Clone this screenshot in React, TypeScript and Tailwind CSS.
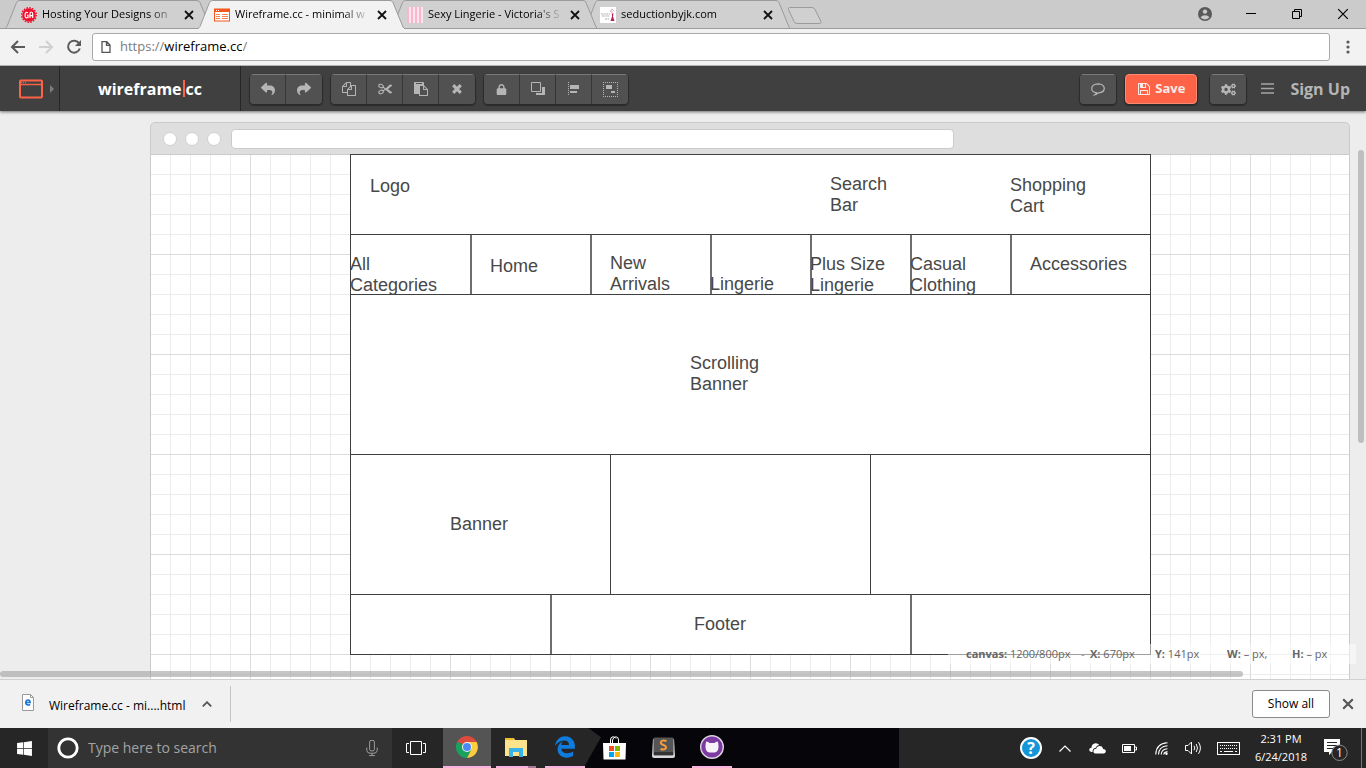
import React from "react";
import { FaReply, FaShare, FaLock, FaWindows, FaEdgeLegacy } from "react-icons/fa6";
import { FaCogs } from "react-icons/fa";

const UI = "font-['Open_Sans','Noto_Sans',sans-serif]";

type TabProps = {
  title: string;
  icon: React.ReactNode;
  active?: boolean;
  layer: string;
};

function CloseGlyph({ className }: { className: string }) {
  return (
    <svg viewBox="0 0 10 10" className={className} fill="none" stroke="currentColor">
      <path d="M1 1l8 8M9 1l-8 8" />
    </svg>
  );
}

function Tab({ title, icon, active, layer }: TabProps) {
  return (
    <div role="tab" aria-selected={!!active} className={`relative flex h-[29px] w-[193px] shrink-0 items-center pl-4 ${layer}`}>
      <svg className="absolute left-0 top-0 h-[29px] w-[207px]" viewBox="0 0 207 29" fill="none">
        <path
          d="M0 28.5L2 26.5L11.5 2.5Q12.500 .5 14.500 .5H192Q194 .5 195 2.500L205 27L206.500 28.5"
          fill={active ? "#f2f2f2" : "#d0d0d0"}
          stroke="#9b9b9b"
        />
        {active ? <path d="M1 28.5H206" stroke="#f2f2f2" /> : <path d="M0 28.5H207" stroke="#9b9b9b" />}
      </svg>
      <span className="relative size-4 shrink-0">{icon}</span>
      <span className="relative ml-[5px] w-[135px] whitespace-nowrap text-[11px] text-black mask-r-from-80%">{title}</span>
      <button aria-label="Close tab" className="relative ml-[7px] text-[#111]">
        <CloseGlyph className="size-[10px] stroke-[1.8]" />
      </button>
    </div>
  );
}

const GaIcon = (
  <svg viewBox="0 0 16 16" className="size-4">
    <circle cx="8" cy="8" r="6.8" fill="#f0112e" />
    <circle cx="8" cy="8" r="7.300" fill="none" stroke="#f0112e" strokeWidth="1.400" strokeDasharray="1.5 1.370" />
    <path d="M7 5.700Q4.300 4.300 4.100 8T7 10.500V8.400H6M9 11V7Q9 5 10.300 5T11.700 7V11M9 8.700H11.700" fill="none" stroke="#fff" strokeWidth="1.200" />
  </svg>
);

const WireIcon = (
  <svg viewBox="0 0 16 16" className="size-4">
    <rect x=".5" y="2" width="15" height="12" fill="#fff" stroke="#f4561d" />
    <path d="M0 3.500H16" stroke="#f4561d" strokeWidth="3" />
    <path d="M2 3.500H3M4 3.500H5" stroke="#fff" />
    <path d="M2 7.500H6M2 9.500H6M2 11.500H6M8 7.500H14M8 9.500H14M8 11.500H14" stroke="#f7824f" />
  </svg>
);

const StripeIcon = (
  <svg viewBox="0 0 16 16" className="size-4">
    <path fill="#fde7ee" d="M0 0h16v16H0z" />
    <path d="M1 0V16M5 0V16M9 0V16M13 0V16" stroke="#fbb6cc" strokeWidth="2" />
  </svg>
);

const SeductionIcon = (
  <svg viewBox="0 0 16 16" className="size-4">
    <path fill="#fff" d="M0 0h16v16H0z" />
    <path d="M1 7H10M2 9H9M5 12H9" stroke="#b5adb0" strokeDasharray="2 .6" />
    <path d="M12 2l-2 3M12 2l2 2M12 4v3" stroke="#d7a8b5" />
    <path d="M12 6.500h1.500l-.5 3 1.500 4.500h-4l1.500-4.500z" fill="#bd2454" />
  </svg>
);

function ToolButton({ label, children, className = "" }: { label: string; children: React.ReactNode; className?: string }) {
  return (
    <button
      aria-label={label}
      className={`flex h-[30px] w-9 items-center justify-center border-t border-t-[#7a7a7a] bg-[#515151] text-[#b5b5b5] ${className}`}
    >
      {children}
    </button>
  );
}

function ToolGroup({ children }: { children: React.ReactNode }) {
  return (
    <div className="flex divide-x divide-[#363636] overflow-hidden rounded-[4px] shadow-[0_1px_1px_1px_#2b2b2b]">{children}</div>
  );
}

function Legacy({ d, className = "size-[14px]" }: { d: string; className?: string }) {
  return (
    <svg viewBox="0 0 1792 1792" fill="currentColor" className={className}>
      <path d={d} />
    </svg>
  );
}

const COPY =
  "M1696 384q40 0 68 28t28 68v1216q0 40-28 68t-68 28h-960q-40 0-68-28t-28-68v-288h-544q-40 0-68-28t-28-68v-672q0-40 20-88t48-76l408-408q28-28 76-48t88-20h416q40 0 68 28t28 68v328q68-40 128-40h416zm-544 213l-299 299h299v-299zm-640-384l-299 299h299v-299zm196 647l316-316v-416h-384v416q0 40-28 68t-68 28h-416v640h512v-256q0-40 20-88t48-76zm956 804v-1152h-384v416q0 40-28 68t-68 28h-416v640h896z";
const PASTE =
  "M768 1664h896v-640h-416q-40 0-68-28t-28-68v-416h-384v1152zm256-1440v-64q0-13-9.5-22.5t-22.5-9.5h-704q-13 0-22.5 9.5t-9.5 22.5v64q0 13 9.5 22.5t22.5 9.5h704q13 0 22.5-9.5t9.5-22.5zm256 672h299l-299-299v299zm512 128v672q0 40-28 68t-68 28h-960q-40 0-68-28t-28-68v-160h-544q-40 0-68-28t-28-68v-1344q0-40 28-68t68-28h1088q40 0 68 28t28 68v328q21 13 36 28l408 408q28 28 48 76t20 88z";
const FLOPPY =
  "M512 1536h768v-384h-768v384zm896 0h128v-896q0-14-10-38.5t-20-34.5l-281-281q-10-10-34-20t-39-10v416q0 40-28 68t-68 28h-576q-40 0-68-28t-28-68v-416h-128v1280h128v-416q0-40 28-68t68-28h832q40 0 68 28t28 68v416zm-384-928v-320q0-13-9.5-22.5t-22.5-9.5h-192q-13 0-22.5 9.5t-9.5 22.5v320q0 13 9.5 22.5t22.5 9.5h192q13 0 22.5-9.5t9.5-22.5zm640 32v928q0 40-28 68t-68 28h-1344q-40 0-68-28t-28-68v-1344q0-40 28-68t68-28h928q40 0 88 20t76 48l280 280q28 28 48 76t20 88z";

function BrowserChrome() {
  return (
    <header className="relative z-20 shrink-0">
      <div className="flex h-[29px] border-b border-[#9b9b9b] bg-[#cbcbcb] pl-[5px]">
        <div role="tablist" className="flex">
          <Tab title="Hosting Your Designs on" icon={GaIcon} layer="z-30" />
          <Tab title="Wireframe.cc - minimal w" icon={WireIcon} active layer="z-40" />
          <Tab title="Sexy Lingerie - Victoria's S" icon={StripeIcon} layer="z-20" />
          <Tab title="seductionbyjk.com" icon={SeductionIcon} layer="z-10" />
        </div>
        <button aria-label="New tab" className="ml-[10px] self-start pt-[7px]">
          <svg viewBox="0 0 36 18" className="h-[18px] w-9" fill="#d0d0d0" stroke="#9b9b9b">
            <path d="M2.500 .5H25Q27 .5 28 2.500L34 14.500Q34.500 16.500 32.500 16.500H10Q8 16.500 7 14.500L1.500 2.500Q1 .5 2.500 .5Z" />
          </svg>
        </button>
        <div className="ml-auto flex h-[27px] items-center text-black">
          <button aria-label="Profile" className="flex w-[46px] justify-center">
            <svg viewBox="0 0 14 14" className="size-[14px]">
              <circle cx="7" cy="7" r="7" fill="#5a5a5a" />
              <circle cx="7" cy="4.600" r="2.200" fill="#cbcbcb" />
              <path d="M2.500 10.300Q4 8.300 7 8.300T11.500 10.300Q10 12.400 7 12.400T2.500 10.300" fill="#cbcbcb" />
            </svg>
          </button>
          <button aria-label="Minimize" className="flex w-[46px] justify-center">
            <svg viewBox="0 0 10 10" className="size-[10px]" stroke="#000"><path d="M0 4.500H10" /></svg>
          </button>
          <button aria-label="Restore" className="flex w-[46px] justify-center">
            <svg viewBox="0 0 10 10" className="size-[10px]" fill="none" stroke="#000"><path d="M.5 2.500H7.500V9.500H.5ZM2.500 2.500V.5H9.500V7.500H7.500" /></svg>
          </button>
          <button aria-label="Close window" className="flex w-[46px] justify-center">
            <CloseGlyph className="size-3" />
          </button>
        </div>
      </div>
      <div className="flex h-[37px] items-center border-b border-[#b2b2b2] bg-[#f2f2f2] pl-[10px]">
        <button aria-label="Back" className="flex w-7 text-[#5a5a5a]">
          <svg viewBox="0 0 16 16" className="size-4" fill="none" stroke="currentColor" strokeWidth="2"><path d="M15 8H2.500M8 2L2 8l6 6" /></svg>
        </button>
        <button aria-label="Forward" className="flex w-7 text-[#d0d0d0]">
          <svg viewBox="0 0 16 16" className="size-4" fill="none" stroke="currentColor" strokeWidth="2"><path d="M1 8H13.500M8 2l6 6-6 6" /></svg>
        </button>
        <button aria-label="Reload" className="flex w-[26px] text-[#5a5a5a]">
          <svg viewBox="0 0 16 16" className="size-4" fill="none" stroke="currentColor" strokeWidth="2">
            <path d="M13.200 4.500A6 6 0 1 0 13.800 9.500" />
            <path d="M15 1v6H9z" fill="currentColor" stroke="none" />
          </svg>
        </button>
        <label className="flex h-7 grow items-center rounded-[3px] border border-[#a9a9a9] bg-white pl-2 text-[13px] text-[#7b7b7b]">
          <svg viewBox="0 0 10 12" className="mr-[9px] h-3 w-[10px]" fill="none" stroke="#555" strokeWidth="1.300">
            <path d="M1 .7H5.800L9 4V11.300H1ZM5.500 .7V4.300H9" />
          </svg>
          https://
          <input aria-label="Address" defaultValue="wireframe.cc" className="field-sizing-content text-black outline-none" />/
        </label>
        <button aria-label="Browser menu" className="flex w-9 justify-center">
          <svg viewBox="0 0 4 14" className="h-[14px] w-1" fill="#5a5a5a">
            <circle cx="2" cy="2" r="1.600" /><circle cx="2" cy="7" r="1.600" /><circle cx="2" cy="12" r="1.600" />
          </svg>
        </button>
      </div>
    </header>
  );
}

function AppToolbar() {
  return (
    <nav className="relative z-10 flex h-[45px] shrink-0 items-center bg-[#404040] shadow-[0_1px_3px_#0000008c]">
      <button aria-label="Device" className="flex h-full w-[60px] items-center gap-[6px] border-r border-[#262626] pl-[18px]">
        <svg viewBox="0 0 26 20" className="h-5 w-[26px]" fill="none" stroke="#ff6347" strokeWidth="2">
          <rect x="2" y="1.500" width="22" height="17" rx="1" />
          <path d="M2 5.500H24" strokeWidth="1.500" />
          <path d="M3 3.500H9" strokeWidth="1" strokeDasharray="1 1" />
        </svg>
        <svg viewBox="0 0 4 8" className="h-2 w-1" fill="#7d7d7d"><path d="M0 0L4 4L0 8Z" /></svg>
      </button>
      <a href="#home" className="flex h-full w-[181px] items-center justify-center border-r border-[#262626] text-base font-bold text-white">
        wireframe<span className="mx-px h-[17px] w-[2px] bg-[#ff6347]" />cc
      </a>
      <div className="ml-[9px] flex gap-[9px]">
        <ToolGroup>
          <ToolButton label="Undo"><FaReply className="size-[14px]" /></ToolButton>
          <ToolButton label="Redo"><FaShare className="size-[14px]" /></ToolButton>
        </ToolGroup>
        <ToolGroup>
          <ToolButton label="Copy"><Legacy d={COPY} /></ToolButton>
          <ToolButton label="Cut">
            <svg viewBox="0 0 14 14" className="size-[14px]" fill="none" stroke="currentColor" strokeWidth="1.100">
              <ellipse cx="3" cy="4" rx="2.300" ry="1.700" transform="rotate(20 3 4)" />
              <ellipse cx="3" cy="10" rx="2.300" ry="1.700" transform="rotate(-20 3 10)" />
              <path d="M5 5L7.500 7L12 10.800L13.500 10.500L8.500 6.600M5 9L7.500 7.300L12 3.200L13.500 3.500L8.500 7.600" />
            </svg>
          </ToolButton>
          <ToolButton label="Paste"><Legacy d={PASTE} /></ToolButton>
          <ToolButton label="Delete">
            <svg viewBox="0 0 10 10" className="size-[10px]" stroke="currentColor" strokeWidth="3.200"><path d="M1.200 1.200L8.800 8.800M8.800 1.200L1.200 8.800" /></svg>
          </ToolButton>
        </ToolGroup>
        <ToolGroup>
          <ToolButton label="Lock"><FaLock className="size-[11px]" /></ToolButton>
          <ToolButton label="Arrange">
            <svg viewBox="0 0 14 14" className="size-[14px]" fill="none" stroke="currentColor">
              <path d="M.5 .5H9.500V9.500H.5Z" />
              <path d="M11 5H14V13H5V11H11Z" fill="currentColor" stroke="none" />
            </svg>
          </ToolButton>
          <ToolButton label="Align">
            <svg viewBox="0 0 12 14" className="h-[14px] w-3" fill="currentColor">
              <path d="M.5 0V14" stroke="currentColor" strokeDasharray="1 1" />
              <path d="M2 3H11V7H2ZM2 9H9V11H2Z" />
            </svg>
          </ToolButton>
          <ToolButton label="Group">
            <svg viewBox="0 0 15 15" className="size-[15px]" fill="currentColor">
              <path d="M0 .5H15M0 14.500H15M.5 2V14M14.500 2V14" fill="none" stroke="currentColor" strokeDasharray="1 1" />
              <path d="M3 3H9V7H3ZM8 9H12V11H8Z" />
            </svg>
          </ToolButton>
        </ToolGroup>
      </div>
      <div className="ml-auto flex items-center pr-4">
        <ToolGroup>
          <ToolButton label="Comments">
            <svg viewBox="0 0 14 13" className="h-[13px] w-[14px]" fill="none" stroke="currentColor" strokeWidth="1.200">
              <path d="M5.500 9.700Q.7 9 .7 5.400Q1 1 7 .8Q13 1 13.300 5.400Q13 9.600 7.500 9.900Q5.500 11.800 3.500 12Q5 10.800 5.500 9.700Z" />
            </svg>
          </ToolButton>
        </ToolGroup>
        <button className="ml-[9px] flex h-[30px] w-[72px] items-center justify-center gap-1 rounded-[4px] border border-[#ff8a72] bg-[#ff6347] text-[13px] font-bold text-[#f8ebe8] shadow-[0_1px_1px_1px_#2b2b2b]">
          <Legacy d={FLOPPY} />
          Save
        </button>
        <div className="ml-[13px]">
          <ToolGroup>
            <ToolButton label="Settings"><FaCogs className="size-[15px]" /></ToolButton>
          </ToolGroup>
        </div>
        <button aria-label="Menu" className="ml-[15px]">
          <svg viewBox="0 0 13 11" className="h-[11px] w-[13px]" stroke="#a5a5a5" strokeWidth="1.500"><path d="M0 1H13M0 5.500H13M0 10H13" /></svg>
        </button>
        <a href="#signup" className="ml-4 whitespace-nowrap text-base font-bold text-[#b5b5b5]">Sign Up</a>
      </div>
    </nav>
  );
}

function Wireframe() {
  const row = "flex border-t border-[#3f3f3f]";
  const split = "border-l-2 border-[#6e6e6e]";
  return (
    <div className="relative -mt-px ml-[199px] w-[801px] border-x border-b border-[#3f3f3f] bg-white font-['Liberation_Sans',sans-serif] text-lg leading-[21px] text-[#484848]">
      <div className={`h-20 ${row}`}>
        <div className="w-[460px] pl-[19px] pt-[21px]">Logo</div>
        <div className="w-[180px] pl-[19px] pt-[19px]">Search<br />Bar</div>
        <div className="pl-[19px] pt-5">Shopping<br />Cart</div>
      </div>
      <div className={`h-[60px] ${row}`}>
        <div className="w-[119px] pt-[19px]"><p className="-ml-px">All<br />Categories</p></div>
        <div className={`w-[120px] pl-[18px] pt-[21px] ${split}`}>Home</div>
        <div className={`w-[120px] pl-[18px] pt-[18px] ${split}`}>New<br />Arrivals</div>
        <div className={`w-[100px] pt-[39px] ${split}`}><p className="-ml-[2px]">Lingerie</p></div>
        <div className={`w-[100px] pt-[19px] ${split}`}><p className="-ml-[2px]">Plus Size<br />Lingerie</p></div>
        <div className={`w-[100px] pt-[19px] ${split}`}><p className="-ml-[2px]">Casual<br />Clothing</p></div>
        <div className={`grow pl-[18px] pt-[19px] ${split}`}>Accessories</div>
      </div>
      <div className={`h-40 pl-[339px] pt-[58px] ${row}`}>Scrolling<br />Banner</div>
      <div className={`h-[140px] ${row}`}>
        <div className="w-[259px] pl-[99px] pt-[59px]">Banner</div>
        <div className="w-[260px] border-l border-[#3f3f3f]" />
        <div className="grow border-l border-[#3f3f3f]" />
      </div>
      <div className={`h-[60px] ${row}`}>
        <div className="w-[199px]" />
        <div className={`w-[360px] pl-[142px] pt-[19px] ${split}`}>Footer</div>
        <div className={`grow ${split}`} />
      </div>
    </div>
  );
}

function Workspace() {
  return (
    <main className="relative flex min-h-0 grow flex-col overflow-hidden bg-[#ededed] pl-[150px] pr-4 pt-[11px]">
      <div className="flex h-[33px] shrink-0 items-center rounded-t-[5px] border border-[#cbcbcb] bg-[#dedede] pl-3">
        <div className="flex gap-2">
          <span className="size-[14px] rounded-full border border-[#d0d0d0] bg-white" />
          <span className="size-[14px] rounded-full border border-[#d0d0d0] bg-white" />
          <span className="size-[14px] rounded-full border border-[#d0d0d0] bg-white" />
        </div>
        <input aria-label="Page address" className="ml-[10px] h-5 w-[61%] rounded-[4px] border border-[#cbcbcb] bg-white px-2 text-xs outline-none" />
      </div>
      <div className="grow border-x border-[#cbcbcb] bg-white bg-[linear-gradient(to_right,transparent_99px,#dcdcdc_99px),linear-gradient(to_bottom,transparent_99px,#dcdcdc_99px),linear-gradient(to_right,transparent_19px,#ececec_19px),linear-gradient(to_bottom,transparent_19px,#ececec_19px)] bg-size-[100px_100px,100px_100px,20px_20px,20px_20px]">
        <Wireframe />
      </div>
      <div className="absolute bottom-[15px] right-[10px] flex h-5 w-[408px] items-center whitespace-nowrap bg-white/50 pl-[18px] text-[11px] text-[#666]">
        <span className="w-[115px]"><b>canvas:</b> 1200/800px</span>
        <span className="w-[9px] text-[#999]">-</span>
        <span className="w-[65px]"><b>X:</b> 670px</span>
        <span className="w-[72px]"><b>Y:</b> 141px</span>
        <span className="w-[65px]"><b>W:</b> – px,</span>
        <span><b>H:</b> – px</span>
      </div>
      <div className="absolute bottom-[2px] left-0 h-[6px] w-[91%] rounded-full bg-[#a0a0a0]/60" />
      <div className="absolute right-[2px] top-[39px] h-[293px] w-[6px] rounded-full bg-[#a0a0a0]/60" />
    </main>
  );
}

function Downloads() {
  return (
    <section className="flex h-[49px] shrink-0 items-center border-t border-[#d0d0d0] bg-[#f1f1f1] pl-[21px] pr-3">
      <svg viewBox="0 0 14 17" className="mb-1 h-[17px] w-[14px]">
        <path d="M1.500 .5H9.500L12.500 3.500V16.500H1.500Z" fill="#fff" stroke="#9a9a9a" />
        <path d="M9.500 .5V3.500H12.500" fill="none" stroke="#9a9a9a" />
        <path d="M4.800 8.500H9.200Q9 5.900 7 5.900T4.700 8.500Q4.900 11 7.200 11Q8.300 11 9.100 10.500" fill="none" stroke="#1976d2" strokeWidth="1.500" />
      </svg>
      <a href="#download" className="ml-[14px] mt-1 w-[140px] whitespace-nowrap text-xs text-black">Wireframe.cc - mi....html</a>
      <button aria-label="Download options" className="ml-[13px]">
        <svg viewBox="0 0 10 6" className="h-[6px] w-[10px]" fill="none" stroke="#555" strokeWidth="1.800"><path d="M.8 5.400L5 1.200L9.200 5.400" /></svg>
      </button>
      <span className="ml-[18px] h-9 w-px bg-[#c4c4c4]" />
      <button className="ml-auto h-7 w-[78px] rounded-[3px] border border-[#8a8a8a] bg-white text-xs text-black">Show all</button>
      <button aria-label="Close downloads" className="ml-3 text-[#555]"><CloseGlyph className="size-3 stroke-[1.800]" /></button>
    </section>
  );
}

function Chrome() {
  return (
    <svg viewBox="0 0 22 22" className="size-[22px]">
      <path d="M11 11L1.470 5.500A11 11 0 0 1 20.530 5.500Z" fill="#dd4b3e" />
      <path d="M11 11L1.470 5.500A11 11 0 0 0 11 22L15.500 13.500Z" fill="#1aa15f" />
      <path d="M11 6H20.700A11 11 0 0 1 11 22L15.500 13.200Z" fill="#fecd3f" />
      <circle cx="11" cy="11" r="5" fill="#f4f4f4" />
      <circle cx="11" cy="11" r="4" fill="#4a8af4" />
    </svg>
  );
}

function Taskbar() {
  const tray = "flex h-full w-8 items-center justify-center";
  const app = "relative flex h-full w-10 items-center justify-center";
  return (
    <footer className="flex h-10 shrink-0 items-center bg-[#262626] text-white">
      <button aria-label="Start" className="flex h-full w-12 items-center justify-center"><FaWindows className="size-[17px]" /></button>
      <label className="flex h-full w-[344px] shrink-0 items-center bg-[#333] pl-[9px] pr-[14px]">
        <svg viewBox="0 0 22 22" className="size-[22px]" fill="none" stroke="#fff" strokeWidth="2.800"><circle cx="11" cy="11" r="9.200" /></svg>
        <input aria-label="Type here to search" placeholder="Type here to search" className="ml-[9px] min-w-0 grow bg-transparent text-sm outline-none placeholder:text-[#a3a3a3]" />
        <svg viewBox="0 0 12 18" className="h-[17px] w-3" fill="none" stroke="#a3a3a3">
          <rect x="3.500" y=".5" width="5" height="11" rx="1.500" />
          <path d="M.5 8V11Q.8 14 4 14H8Q11.200 14 11.500 11V8M6 14V16.500M3 16.500H9" />
        </svg>
      </label>
      <button aria-label="Task view" className="flex h-full w-[51px] items-center pl-[14px]">
        <svg viewBox="0 0 20 14" className="h-[14px] w-5" fill="none" stroke="#fff"><path d="M4.500 .5H15.500V13.500H4.500ZM3 2.500H.5V11.500H3M17 2.500H19.500V11.500H17" /></svg>
      </button>
      <div className="relative flex h-full w-[456px] bg-[#060509]">
        <span className="absolute inset-y-0 left-0 w-[158px] bg-[#262626] [clip-path:polygon(0_0,92%_0,100%_23%,89%_100%,0_100%)]" />
        <button aria-label="Chrome" className="relative flex h-full w-12 items-center justify-center border-b-2 border-[#f9b1de] bg-[#545454]"><Chrome /></button>
        <button aria-label="File Explorer" className={`ml-[5px] border-b-2 border-[#f9b1de] ${app}`}>
          <svg viewBox="0 0 22 19" className="h-[19px] w-[22px]">
            <path d="M0 0H9L10 2H22V18H0Z" fill="#fde38c" />
            <path d="M0 0H9V2H0Z" fill="#f3bd28" />
            <path d="M4 19V10H18V19H14V14H8V19Z" fill="#39b3e8" />
          </svg>
          <span className="absolute -bottom-[2px] right-0 h-[2px] w-2 bg-[#a87a98]" />
        </button>
        <button aria-label="Edge" className={`ml-[9px] border-b-2 border-[#f9b1de] text-[#0f7bdc] ${app}`}><FaEdgeLegacy className="size-[22px]" /></button>
        <button aria-label="Store" className={`ml-[9px] ${app}`}>
          <svg viewBox="0 0 23 24" className="h-6 w-[23px]">
            <path d="M7.500 7V4Q7.500 .8 10 .8Q12 .8 13 2.500M15.500 7V4Q15.500 .8 13 .8T9.500 4V7" fill="none" stroke="#fff" />
            <path d="M0 7H23L22.500 23.500H.5Z" fill="#fff" />
            <path d="M6 10H11V15H6Z" fill="#f25022" /><path d="M12 10H17V15H12Z" fill="#7fba00" />
            <path d="M6 16H11V21H6Z" fill="#00a4ef" /><path d="M12 16H17V21H12Z" fill="#ffb900" />
          </svg>
        </button>
        <button aria-label="Sublime Text" className={`ml-[9px] ${app}`}>
          <svg viewBox="0 0 23 22" className="h-[22px] w-[23px]">
            <path d="M1 2L0 19Q0 21 2 21H21Q23 21 23 19L22 2Z" fill="#d8d8d8" />
            <rect x="1.500" y=".5" width="20" height="18" rx="1" fill="#555" />
            <path d="M2 15H21V18H2Z" fill="#333" />
            <path d="M14.500 4Q9 2.500 8.800 5.500Q8.700 7 11.500 8T14 11Q12.500 13.500 8.500 12" fill="none" stroke="#f79a3b" strokeWidth="2" />
          </svg>
        </button>
        <button aria-label="GitHub Desktop" className={`ml-[9px] border-b-2 border-[#f9b1de] ${app}`}>
          <svg viewBox="0 0 24 24" className="size-6">
            <circle cx="12" cy="12" r="11.300" fill="#7c3ba0" stroke="#dcd3e2" strokeWidth="1.400" />
            <path d="M6.200 6.500Q8.500 6.700 9.500 8H14.500Q15.500 6.700 17.800 6.500Q18.600 9 18.500 12Q18.500 16.800 14.500 17.500H9.500Q5.500 16.800 5.500 12Q5.400 9 6.200 6.500Z" fill="#f7f2f8" />
          </svg>
        </button>
      </div>
      <div className="ml-auto flex h-full shrink-0 items-center">
        <button aria-label="Help" className="flex h-full w-9 items-center justify-center">
          <span className="flex size-[22px] items-center justify-center rounded-full border-2 border-white bg-[#1496d8] text-base font-bold">?</span>
        </button>
        <button aria-label="Hidden icons" className={tray}>
          <svg viewBox="0 0 12 7" className="h-[7px] w-3" fill="none" stroke="#fff" strokeWidth="1.200"><path d="M.5 6.500L6 1L11.500 6.500" /></svg>
        </button>
        <button aria-label="OneDrive" className={tray}>
          <svg viewBox="0 0 17 11" className="h-[11px] w-[17px]" fill="#fff">
            <path d="M2.500 9Q0 8.500 .2 6.500Q.5 4.800 2.500 4.700Q2.800 .6 6.500 .3Q9 .2 10.300 2Q7.500 2.200 6.700 4.700Q3.500 5.200 3.500 9Z" />
            <path d="M6 10.500Q4.200 10 4.400 8Q4.700 5.900 7.200 5.800Q8 3 10.800 3Q13.600 3.200 14 6Q16.800 6.200 16.800 8.300Q16.700 10.200 15 10.500Z" />
          </svg>
        </button>
        <button aria-label="Battery" className={tray}>
          <svg viewBox="0 0 15 9" className="h-[9px] w-[15px]" fill="none" stroke="#fff"><path d="M.5 .5H12.500V8.500H.5ZM13 3H14.500V6H13" /><path d="M2 2H9V7H2Z" fill="#fff" stroke="none" /></svg>
        </button>
        <button aria-label="Network" className={tray}>
          <svg viewBox="0 0 13 13" className="size-[13px]" fill="none" stroke="#fff">
            <path d="M.8 12.500Q1 1.500 12.500 .8M3.500 12.500Q3.800 4.500 12.500 3.800M6.200 12.500Q6.500 7.200 12.500 6.800M8.800 12.500Q9 10 12.500 9.600" strokeWidth="1.100" />
            <circle cx="11.500" cy="11.700" r="1.200" fill="#fff" stroke="none" />
          </svg>
        </button>
        <button aria-label="Volume" className={tray}>
          <svg viewBox="0 0 17 14" className="h-[14px] w-[17px]" fill="none" stroke="#fff"><path d="M.5 4.500H3L6.500 1V13L3 9.500H.5ZM9 4.800Q10.500 7 9 9.200M11.200 3Q13.800 7 11.200 11M13.500 1.200Q17.300 7 13.500 12.800" /></svg>
        </button>
        <button aria-label="Touch keyboard" className="flex h-full w-[42px] items-center pl-2">
          <svg viewBox="0 0 23 13" className="h-[13px] w-[23px]" fill="none" stroke="#fff"><rect x=".5" y=".5" width="22" height="12" /><path d="M3 3.500H20M3 6.500H20" strokeDasharray="1 1" /><path d="M3 9.500H5M7 9.500H16M18 9.500H20" /></svg>
        </button>
        <button className="h-full w-[60px] text-center text-[11px] leading-[18px]">2:31 PM<br />6/24/2018</button>
        <button aria-label="Notifications" className="flex h-full w-[50px] items-center justify-center">
          <svg viewBox="0 0 24 25" className="h-[25px] w-6">
            <path d="M0 3H16V16H8L5 19V16H0Z" fill="#fff" />
            <path d="M3 6.500H13M3 9.500H13M3 12.500H9" stroke="#262626" />
            <circle cx="15.500" cy="16.800" r="7.700" fill="#262626" stroke="#8a8a8a" />
            <text x="15.500" y="21" textAnchor="middle" fontSize="12" fill="#fff">1</text>
          </svg>
        </button>
        <button aria-label="Show desktop" className="h-full w-[5px] border-l border-[#777]" />
      </div>
    </footer>
  );
}

export default function App() {
  return (
    <div className={`flex h-screen flex-col overflow-hidden ${UI}`}>
      <BrowserChrome />
      <AppToolbar />
      <Workspace />
      <Downloads />
      <Taskbar />
    </div>
  );
}
